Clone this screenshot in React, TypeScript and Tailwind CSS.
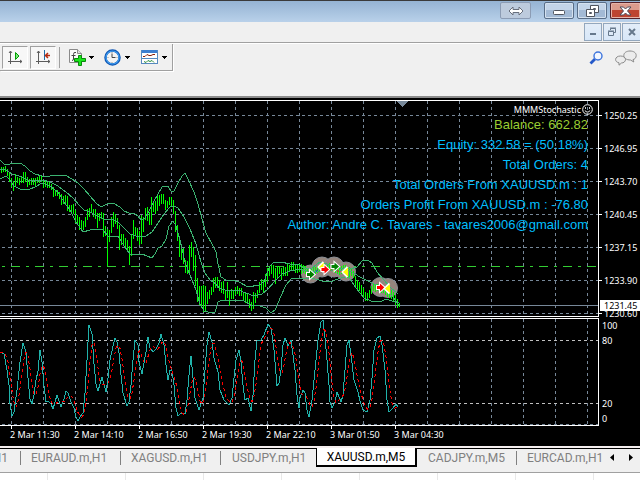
// src/App.tsx

import clsx from "clsx";

const PRICES = ["1250.25", "1246.95", "1243.70", "1240.45", "1237.15", "1233.90", "1230.60"];
const TIMES = [
  "2 Mar 11:30",
  "2 Mar 14:10",
  "2 Mar 16:50",
  "2 Mar 19:30",
  "2 Mar 22:10",
  "3 Mar 01:50",
  "3 Mar 04:30",
];
const STATS = [
  "Equity: 332.58 = (50.18%)",
  "Total Orders: 4",
  "Total Orders From XAUUSD.m : 1",
  "Orders Profit From XAUUSD.m : -76.80",
  "Author: Andre C. Tavares - tavares2006@gmail.com",
];
const GRID_X = Array.from({ length: 40 }, (_, i) => 11 + i * 32);
const GRID_Y = [115, 148, 181, 214, 247, 280, 313];

// high / low of every bar, ten bars per row, one bar each 2px
const BARS = [
  [167, 172, 167, 171, 166, 171, 169, 175, 173, 181, 178, 186, 181, 190, 174, 186, 177, 182, 178, 184],
  [176, 182, 172, 182, 172, 181, 177, 186, 179, 184, 178, 184, 178, 184, 178, 185, 177, 182, 176, 182],
  [176, 181, 180, 187, 181, 186, 181, 187, 182, 187, 184, 189, 187, 196, 190, 195, 190, 195, 192, 198],
  [194, 204, 196, 203, 195, 202, 196, 210, 205, 211, 205, 212, 204, 213, 210, 222, 215, 224, 217, 229],
  [220, 229, 221, 229, 217, 226, 209, 219, 208, 216, 204, 212, 209, 216, 209, 218, 213, 227, 213, 220],
  [212, 218, 213, 236, 226, 235, 229, 265, 230, 241, 217, 232, 212, 226, 214, 223, 218, 228, 225, 249],
  [234, 244, 234, 243, 238, 248, 240, 250, 246, 264, 234, 255, 220, 238, 227, 234, 228, 240, 231, 244],
  [215, 243, 217, 231, 208, 219, 207, 220, 212, 224, 197, 224, 203, 211, 201, 213, 195, 210, 195, 205],
  [194, 203, 194, 203, 200, 209, 201, 207, 197, 204, 197, 205, 200, 213, 211, 231, 225, 240, 238, 256],
  [245, 259, 248, 263, 260, 272, 261, 273, 245, 274, 242, 256, 247, 270, 255, 285, 278, 301, 286, 304],
  [286, 307, 285, 311, 286, 311, 292, 303, 290, 298, 287, 294, 278, 291, 277, 287, 277, 287, 280, 290],
  [282, 292, 281, 293, 290, 299, 282, 297, 290, 305, 289, 298, 290, 298, 287, 294, 286, 293, 288, 295],
  [288, 295, 292, 300, 293, 302, 294, 303, 299, 307, 302, 310, 292, 308, 293, 302, 290, 297, 282, 292],
  [279, 289, 280, 291, 274, 286, 268, 281, 267, 275, 265, 273, 265, 277, 268, 283, 266, 278, 267, 273],
  [268, 279, 267, 275, 267, 275, 263, 275, 265, 271, 262, 270, 262, 270, 264, 272, 265, 272, 264, 271],
  [264, 273, 265, 272, 266, 273, 268, 275, 269, 276, 268, 275, 267, 275, 267, 273, 266, 272, 265, 271],
  [264, 270, 264, 271, 265, 270, 264, 270, 263, 270, 264, 270, 264, 271, 265, 272, 266, 273, 267, 274],
  [266, 273, 265, 272, 265, 275, 267, 277, 267, 276, 269, 275, 271, 277, 276, 285, 280, 288, 282, 290],
  [285, 294, 288, 297, 292, 300, 293, 300, 290, 297, 286, 293, 284, 290, 285, 291, 284, 290, 285, 291],
  [285, 292, 286, 292, 286, 294, 287, 296, 289, 297, 290, 298, 292, 301, 295, 304, 299, 307, 303, 306],
].flat();

const UPPER =
  "0,160 4,164 8,165 12,163 20,163 25,166 30,171 35,174 42,176 50,176 58,175 65,175 72,179 78,183 84,189 90,196 96,203 101,207 107,204 113,203 120,207 124,211 129,213 135,214 138,216 141,220 145,218 149,211 153,203 158,194 162,187 168,186 171,191 174,191 178,183 182,176 185,173 188,179 194,192 198,204 202,219 206,233 212,244 216,252 218,264 221,277 226,280 232,280 239,282 248,287 259,285 264,282 267,273 270,266 274,262 281,262 290,264 297,264 304,268 312,268 320,262 330,265 340,268 350,269 357,267 362,261 368,260 372,263 377,272 383,279 390,287 398,294";
const MIDDLE =
  "0,169 6,170 12,174 22,177 28,180 35,180 43,180 50,182 58,186 66,192 73,198 79,205 84,210 90,212 97,216 104,219 112,219 118,222 124,228 130,234 139,237 146,236 152,232 158,223 164,214 170,207 174,206 178,208 184,217 190,229 196,244 201,262 205,273 210,280 216,284 219,288 228,291 238,290 246,293 254,296 262,294 268,289 275,281 282,274 290,271 300,269 310,272 330,270 350,271 360,277 370,282 385,289 392,296 399,305";
const LOWER =
  "0,179 6,176 10,180 14,186 20,189 30,189 35,187 42,183 50,186 58,192 64,202 70,210 76,222 83,232 90,230 96,229 103,230 108,236 118,236 124,246 130,254 142,254 152,258 155,254 158,248 162,246 166,239 169,226 173,221 176,226 180,240 185,262 190,275 196,290 200,304 204,311 212,313 215,312 218,302 222,300 232,300 244,301 251,305 260,306 266,308 271,313 275,310 281,296 286,285 292,278 302,279 312,278 322,281 330,282 338,279 348,276 356,288 364,298 371,301 380,302 386,299 392,301 399,303";

const STOCH_MAIN = [
  0, 352, 4, 354, 7, 370, 9, 385, 10, 404, 12, 416, 14, 412, 17, 390, 20, 362, 23, 343, 26, 352, 28, 378, 30, 399,
  32, 404, 34, 395, 36, 380, 38, 371, 40, 350, 42, 362, 44, 386, 46, 402, 48, 401, 51, 404, 53, 409, 55, 402, 57, 395,
  59, 401, 61, 407, 64, 399, 66, 391, 68, 393, 71, 402, 74, 408, 76, 417, 78, 421, 80, 417, 83, 413, 85, 393, 87, 360,
  89, 325, 92, 334, 94, 364, 96, 384, 98, 391, 100, 384, 102, 377, 104, 384, 106, 392, 108, 378, 110, 360, 113, 346,
  115, 338, 117, 342, 119, 353, 121, 375, 123, 393, 127, 406, 129, 402, 131, 385, 133, 360, 135, 340, 138, 345,
  139, 362, 142, 374, 144, 363, 146, 352, 148, 337, 150, 348, 153, 352, 156, 349, 159, 343, 161, 334, 164, 345,
  166, 365, 168, 380, 170, 370, 172, 371, 174, 385, 176, 408, 178, 416, 181, 413, 185, 414, 187, 400, 189, 375,
  191, 356, 193, 378, 195, 398, 199, 410, 203, 398, 205, 370, 207, 345, 209, 332, 212, 342, 214, 358, 218, 372,
  220, 390, 224, 400, 229, 405, 232, 398, 234, 378, 236, 360, 239, 350, 241, 362, 243, 385, 245, 400, 248, 398,
  251, 411, 253, 395, 255, 360, 257, 341, 261, 340, 264, 335, 268, 324, 271, 328, 274, 350, 277, 386, 279, 383,
  281, 370, 283, 345, 285, 338, 288, 346, 291, 340, 293, 355, 295, 370, 297, 395, 299, 408, 300, 398, 303, 390,
  305, 393, 307, 410, 309, 417, 312, 400, 315, 370, 318, 340, 321, 322, 323, 320, 325, 338, 327, 360, 329, 385,
  330, 402, 332, 408, 335, 402, 337, 392, 341, 402, 343, 395, 345, 370, 347, 345, 349, 340, 351, 355, 354, 380,
  358, 392, 360, 401, 363, 410, 367, 412, 370, 400, 372, 378, 374, 350, 377, 338, 380, 336, 382, 345, 385, 370,
  387, 400, 389, 412, 393, 408, 396, 404, 398, 407,
];

const mainAt = (x: number) => {
  for (let i = 2; i < STOCH_MAIN.length; i += 2) {
    if (STOCH_MAIN[i] >= x) {
      const x0 = STOCH_MAIN[i - 2];
      const y0 = STOCH_MAIN[i - 1];
      const t = Math.max(0, (x - x0) / (STOCH_MAIN[i] - x0));
      return y0 + (STOCH_MAIN[i + 1] - y0) * t;
    }
  }
  return STOCH_MAIN[STOCH_MAIN.length - 1];
};

// signal line: simple average of the last four steps of the main line
const STOCH_SIGNAL = Array.from({ length: 200 }, (_, i) => {
  const x = i * 2;
  const y = (mainAt(x) + mainAt(x - 2) + mainAt(x - 4) + mainAt(x - 6)) / 4;
  return `${x},${y.toFixed(1)}`;
}).join(" ");

const Grid = ({ rows, top, bottom }: { rows: number[]; top: number; bottom: number }) => (
  <g stroke="#778899" strokeDasharray="3 3">
    {GRID_X.map((x) => (
      <line key={x} x1={x + 0.5} x2={x + 0.5} y1={top} y2={bottom} />
    ))}
    {rows.map((y) => (
      <line key={y} x1="2" x2="100%" y1={y + 0.5} y2={y + 0.5} />
    ))}
  </g>
);

const Arrow = ({ x, y, color }: { x: number; y: number; color: string }) => (
  <path
    d="M-3.5 -1.5H-0.5V-4L4 0L-0.5 4V1.5H-3.5Z"
    transform={`translate(${x} ${y})`}
    fill={color}
    stroke="#fff"
    strokeWidth="2"
    paintOrder="stroke"
  />
);

const Exit = ({ x, y }: { x: number; y: number }) => (
  <g transform={`translate(${x} ${y})`}>
    <path d="M2 -5L-3 0L2 5" fill="none" stroke="#fff" strokeWidth="2" />
    <path d="M2.5 -4.5L-2.500 0L2.5 4.5Z" fill="#ffff00" />
  </g>
);

const PriceChart = () => (
  <svg className="block w-full h-[215px]" role="img" aria-label="XAUUSD.m,M5">
    <g transform="translate(0 -101)">
      <g shapeRendering="crispEdges">
        <Grid rows={GRID_Y} top={101} bottom={316} />
        <line x1="0" x2="100%" y1="305.5" y2="305.5" stroke="#778899" />
        <line x1="-13" x2="100%" y1="266.5" y2="266.5" stroke="#32cd32" strokeDasharray="9 6 3 6" />
        <path d="M397 101H408L402.5 107Z" fill="#778899" />
      </g>
      {/* order markers */}
      <g fill="#94857d" stroke="#8b8f96">
        <circle cx="310.5" cy="274" r="9" />
        <circle cx="322" cy="267" r="10" />
        <circle cx="334" cy="267" r="10" />
        <circle cx="346" cy="271.5" r="9.5" />
        <circle cx="380.5" cy="287" r="9.5" />
        <circle cx="388" cy="288" r="9.5" />
      </g>
      <g shapeRendering="crispEdges">
        <path
          d={Array.from({ length: BARS.length / 2 }, (_, i) => {
            const x = 1.5 + i * 2;
            return `M${x} ${BARS[i * 2]}V${BARS[i * 2 + 1] + 1}`;
          }).join("")}
          stroke="#00ff00"
        />
        <g fill="none" stroke="#3cb371">
          <polyline points={UPPER} />
          <polyline points={MIDDLE} />
          <polyline points={LOWER} />
        </g>
      </g>
      <path d="M313 274L321 267" stroke="#0000ff" strokeDasharray="2 2" />
      <path d="M325 269L344 272" stroke="#ff0000" strokeDasharray="2 2" />
      <Arrow x={310.5} y={274.5} color="#008000" />
      <Exit x={321.5} y={267} />
      <Arrow x={325} y={269.5} color="#ff0000" />
      <Arrow x={335} y={266.5} color="#008000" />
      <Exit x={345.5} y={272} />
      <Arrow x={380.5} y={287.5} color="#ff0000" />
      <Exit x={387.5} y={288.5} />
    </g>
  </svg>
);

const StochasticChart = () => (
  <svg className="block w-full h-[106px]" role="img" aria-label="Stochastic">
    <g transform="translate(0 -319)" shapeRendering="crispEdges">
      <Grid rows={[424]} top={319} bottom={425} />
      <g stroke="#c0c0c0" strokeDasharray="3 3">
        <line x1="2" x2="100%" y1="340.5" y2="340.5" />
        <line x1="2" x2="100%" y1="403.5" y2="403.5" />
      </g>
      <polyline points={STOCH_MAIN.join(" ")} fill="none" stroke="#20b2aa" />
      <polyline points={STOCH_SIGNAL} fill="none" stroke="#ff0000" strokeDasharray="3 3" />
    </g>
  </svg>
);

const Smiley = () => (
  <svg className="w-[11px] h-[11px]" viewBox="0 0 11 11" fill="none" stroke="#fff" aria-hidden="true">
    <circle cx="5.500" cy="5.500" r="4.800" />
    <path d="M3.500 3.200v1.600M7.500 3.200v1.600M2.800 6.500Q5.500 9.600 8.200 6.500" />
  </svg>
);

const TitleBar = () => (
  <header className="flex h-[22px] justify-end border-t border-[#3a3a3a] bg-linear-to-b from-[#95b3d3] to-[#b9d1ea] pt-px">
    <button
      aria-label="Resize"
      className="mr-[13px] flex h-[17px] w-[31px] items-center justify-center rounded-xs border border-[#8c9cb4] bg-[#bdcbdd]"
    >
      <svg width="16" height="10" viewBox="0 0 16 10">
        <path d="M1 5L5 1V3.500H11V1L15 5L11 9V6.500H5V9Z" fill="#fff" stroke="#686f7c" />
      </svg>
    </button>
    <button
      aria-label="Minimize"
      className="mr-[3px] flex h-[17px] w-[30px] items-center justify-center rounded-xs border border-[#596e88] bg-linear-to-b from-[#c3d4e8] from-50% to-[#a3bad5] to-50% shadow-[inset_0_0_0_1px_#d4e1ef]"
    >
      <svg width="12" height="10" viewBox="0 0 12 10">
        <rect x="0.500" y="4.500" width="11" height="4" rx="1" fill="#fff" stroke="#50555f" />
      </svg>
    </button>
    <button
      aria-label="Restore"
      className="mr-[3px] flex h-[17px] w-[30px] items-center justify-center rounded-xs border border-[#596e88] bg-linear-to-b from-[#c3d4e8] from-50% to-[#a3bad5] to-50% shadow-[inset_0_0_0_1px_#d4e1ef]"
    >
      <svg width="13" height="12" viewBox="0 0 13 12" fill="#fff" stroke="#50555f">
        <path d="M4.500 0.500H12.500V7.500H4.500ZM7.500 3.500H9.500V4.500H7.500Z" />
        <path d="M0.500 4.500H8.500V11.500H0.500ZM3.500 7.500H5.500V8.500H3.500Z" />
      </svg>
    </button>
    <button
      aria-label="Close"
      className="flex h-[17px] w-[30px] items-center justify-center rounded-l-xs border border-r-0 border-[#54222a] bg-linear-to-b from-[#dc9b8c] from-45% to-[#bd4431] to-50% shadow-[inset_0_0_0_1px_#e6b3a8]"
    >
      <svg width="13" height="10" viewBox="0 0 13 10">
        <path
          d="M1 1H4.500L6.500 3L8.500 1H12L8.500 5L12 9H8.500L6.500 7L4.500 9H1L4.500 5Z"
          fill="#fff"
          stroke="#4d4b58"
        />
      </svg>
    </button>
  </header>
);

const MDI_BUTTON =
  "flex h-[18px] w-[18px] items-center justify-center border border-[#93a7bd] bg-linear-to-b from-[#e3edf8] to-[#d8e7f8]";

const WindowControls = () => (
  <div className="flex h-[21px] justify-end gap-px border-b border-[#a0a0a0] pt-px">
    <button aria-label="Minimize chart" className={MDI_BUTTON}>
      <svg width="10" height="10" viewBox="0 0 10 10">
        <path d="M2 7H8" stroke="#66788c" strokeWidth="2" />
      </svg>
    </button>
    <button aria-label="Restore chart" className={MDI_BUTTON}>
      <svg width="10" height="10" viewBox="0 0 10 10" fill="none" stroke="#66788c">
        <path d="M3.500 3V1.500H8.500V5.500H7M3 1H9" />
        <path d="M1.500 4.500H6.500V8.500H1.500ZM1 4H7" />
      </svg>
    </button>
    <button aria-label="Close chart" className={clsx(MDI_BUTTON, "border-r-0")}>
      <svg width="10" height="10" viewBox="0 0 10 10">
        <path d="M2 2L8 8M8 2L2 8" stroke="#66788c" strokeWidth="2" />
      </svg>
    </button>
  </div>
);

const Caret = () => (
  <svg width="5" height="3" viewBox="0 0 5 3" className="shrink-0" shapeRendering="crispEdges">
    <path d="M0 0H5L2.500 3Z" fill="#000" />
  </svg>
);

const PRESSED =
  "flex h-[23px] w-[26px] items-center justify-center border border-t-[#a0a0a0] border-l-[#a0a0a0] border-r-white border-b-white bg-[#f7f7f7]";

const Axes = () => (
  <path d="M3.500 2V15M1 12.500H15M2 4L3.500 2L5 4M13 11L15 12.500L13 14" fill="none" stroke="#5c5c5c" />
);

const Toolbar = () => (
  <div className="flex h-[53px] items-start justify-between border-t border-white">
    <div className="flex h-[27px] items-center border-r border-b border-[#a0a0a0] pr-[5px] pl-0.5 shadow-[1px_1px_0_#fff]">
      <button aria-label="Auto scroll" className={PRESSED}>
        <svg width="16" height="16" viewBox="0 0 16 16">
          <Axes />
          <path d="M8.500 3.500L12 7L8.500 10.500Z" fill="#7be87b" stroke="#009c00" />
        </svg>
      </button>
      <button aria-label="Chart shift" className={clsx(PRESSED, "ml-0.5")}>
        <svg width="16" height="16" viewBox="0 0 16 16">
          <Axes />
          <path d="M9.500 1V11" stroke="#1d6ba8" />
          <path d="M11 6.500H15M13 4L10.500 6.500L13 9" fill="none" stroke="#b52b10" strokeWidth="1.500" />
        </svg>
      </button>
      <div className="ml-[3px] h-[21px] w-px bg-[#a0a0a0]" />
      <button aria-label="Indicators" className="ml-[9px] flex items-center gap-[3px]">
        <svg width="17" height="18" viewBox="0 0 17 18">
          <path d="M0.500 1.500H8.500L12.500 5.500V14.500H0.500Z" fill="#fafafa" stroke="#8a8a8a" />
          <path d="M8.500 1.500V5.500H12.500" fill="#ddd" stroke="#8a8a8a" />
          <path d="M7 4.500Q4.500 3.500 4.500 6.500V11Q4.500 12.500 3 12.500M2.500 7.500H6.500" fill="none" stroke="#444" />
          <path
            d="M9.500 7.500H12.500V10.500H16.500V13.500H12.500V17.500H9.500V13.500H5.500V10.500H9.500Z"
            fill="#19e51b"
            stroke="#078a0a"
          />
        </svg>
        <Caret />
      </button>
      <button aria-label="Periods" className="ml-[10px] flex items-center gap-1">
        <svg width="17" height="17" viewBox="0 0 17 17">
          <circle cx="8.500" cy="8.500" r="7" fill="#f4f4f4" stroke="#1057b4" strokeWidth="2.500" />
          <circle cx="8.500" cy="8.500" r="6.500" fill="none" stroke="#3f9df0" strokeWidth="1.200" />
          <path d="M8 4.500V8.500H11.500" fill="none" stroke="#444" />
          <path d="M8 3V4M8 13V14M3.500 8.500H4.500M12.500 8.500H13.500" stroke="#999" />
        </svg>
        <Caret />
      </button>
      <button aria-label="Templates" className="ml-[11px] flex items-center gap-1">
        <svg width="17" height="16" viewBox="0 0 17 16">
          <rect x="0.500" y="1.500" width="16" height="13" fill="#fff" stroke="#5689bf" />
          <path d="M1 2.500H16" stroke="#3d7fd0" strokeWidth="3" />
          <path d="M1 9.500H16" stroke="#5689bf" />
          <path d="M2 7.500H4L6 5.500L8 6.500H10L12 5.500H14" fill="none" stroke="#8c2008" />
          <path d="M3 12.500L5 13.500L7 11.500L9 12.500L11 11.500L13 13.500" fill="none" stroke="#2a8c3a" />
        </svg>
        <Caret />
      </button>
    </div>
    <div className="flex h-[27px] items-center gap-3 pr-[3px]">
      <button aria-label="Search">
        <svg width="14" height="14" viewBox="0 0 14 14">
          <path d="M1.500 12.500L6 8" stroke="#2559c9" strokeWidth="2.800" />
          <circle cx="9" cy="5" r="4" fill="#f2f7ff" stroke="#3d74dc" strokeWidth="1.400" />
        </svg>
      </button>
      <button aria-label="Chat">
        <svg width="22" height="16" viewBox="0 0 22 16" fill="#ececec" stroke="#8b8b8b">
          <path d="M15 1C18.500 1 21.200 2.700 21.200 5.500C21.200 8 19.500 9.300 18 9.600L18.800 12L15.500 10C11.500 10 8.800 8.300 8.800 5.500C8.800 2.700 11.500 1 15 1Z" />
          <path d="M5.500 6C8.200 6 10.500 7.300 10.500 9.500C10.500 11.700 8.500 13 6.500 13L4 15.200V12.800C2 12.400 0.600 11.300 0.600 9.500C0.600 7.300 2.800 6 5.500 6Z" />
        </svg>
      </button>
    </div>
  </div>
);

const TAB = "h-[14px] shrink-0 border-r border-[#808080] pl-[10px] text-left leading-[14px] text-[#808080]";

const Tabs = () => (
  <nav className="flex h-6 items-start justify-between border-t border-black font-[Roboto,sans-serif] text-xs whitespace-nowrap">
    <div className="flex min-w-0 items-start pt-0.5">
      <button className="flex h-[14px] w-[21px] shrink-0 justify-end overflow-hidden border-r border-[#808080] pr-3 leading-[14px] text-[#808080]">
        M1
      </button>
      <button className={clsx(TAB, "w-[100px]")}>EURAUD.m,H1</button>
      <button className={clsx(TAB, "w-[100px]")}>XAGUSD.m,H1</button>
      <button className={clsx(TAB, "w-[95px] border-r-0 pl-[11px]")}>USDJPY.m,H1</button>
      <button className="-mt-[3px] h-[19px] w-[101px] shrink-0 border-r-2 border-b-2 border-l border-black bg-white leading-[18px] text-black">
        XAUUSD.m,M5
      </button>
      <button className={clsx(TAB, "w-[100px] pl-[11px]")}>CADJPY.m,M5</button>
      <button className={clsx(TAB, "border-r-0")}>EURCAD.m,H1</button>
    </div>
    <div className="flex gap-[15px] pt-[5px] pr-[7px]">
      <button aria-label="Scroll tabs left">
        <svg width="4" height="7" viewBox="0 0 4 7">
          <path d="M4 0V7L0 3.500Z" />
        </svg>
      </button>
      <button aria-label="Scroll tabs right">
        <svg width="4" height="7" viewBox="0 0 4 7">
          <path d="M0 0V7L4 3.500Z" />
        </svg>
      </button>
    </div>
  </nav>
);

const App = () => {
  return (
    <div className="min-h-screen overflow-hidden bg-[#f0f0f0]">
      <TitleBar />
      <WindowControls />
      <Toolbar />

      <main className="border-t-2 border-[#8c8c8c] bg-black font-['Noto_Sans',sans-serif] text-[9px] text-white">
        {/* Price chart */}
        <div className="flex h-[219px]">
          <div className="relative mt-0.5 min-w-0 flex-1 border-t border-r border-b border-white">
            <PriceChart />
            <div className="absolute top-[3px] right-[5px] flex items-center gap-px leading-[11px]">
              MMMStochastic
              <Smiley />
            </div>
            <div className="absolute top-[14px] right-[10px] text-right font-['Liberation_Sans',sans-serif] text-[13px] leading-5 text-[#00bfff]">
              <p className="text-[#9acd32]">Balance: 662.82</p>
              {STATS.map((line) => (
                <p key={line}>{line}</p>
              ))}
            </div>
          </div>
          <div className="relative w-[41px] overflow-hidden pt-px">
            {PRICES.map((price) => (
              <div key={price} className="flex h-[33px] items-center gap-0.5">
                <span className="h-px w-[3px] shrink-0 bg-white" />
                {price}
              </div>
            ))}
            <div className="absolute right-0 bottom-[6px] left-px h-[11px] bg-white pl-1 leading-[11px] text-black">
              1231.45
            </div>
          </div>
        </div>

        {/* Stochastic window */}
        <div className="mt-px flex h-[108px]">
          <div className="min-w-0 flex-1 border-t border-r border-b border-white">
            <StochasticChart />
          </div>
          <div className="flex w-[41px] flex-col justify-between pl-[3px] leading-[15px]">
            <div>
              <p>100</p>
              <p>80</p>
            </div>
            <div>
              <p>20</p>
              <p>0</p>
            </div>
          </div>
        </div>

        {/* Time axis */}
        <div className="flex h-5 pl-[10px]">
          {TIMES.map((time) => (
            <div key={time} className="w-16 shrink-0 whitespace-nowrap">
              <div className="ml-px h-[3px] w-px bg-white" />
              <p className="leading-[11px]">{time}</p>
            </div>
          ))}
        </div>
      </main>

      <div className="h-0.5 bg-[#f4eeee]" />
      <Tabs />
      <div className="flex h-2 border-t border-[#a0a0a0] bg-white">
        {[0, 1, 2, 3, 4, 5, 6, 7].map((i) => (
          <div key={i} className={clsx("shrink-0 border-r border-[#e8e8e8]", i ? "w-[78px]" : "w-12")} />
        ))}
      </div>
    </div>
  );
};

export default App;
